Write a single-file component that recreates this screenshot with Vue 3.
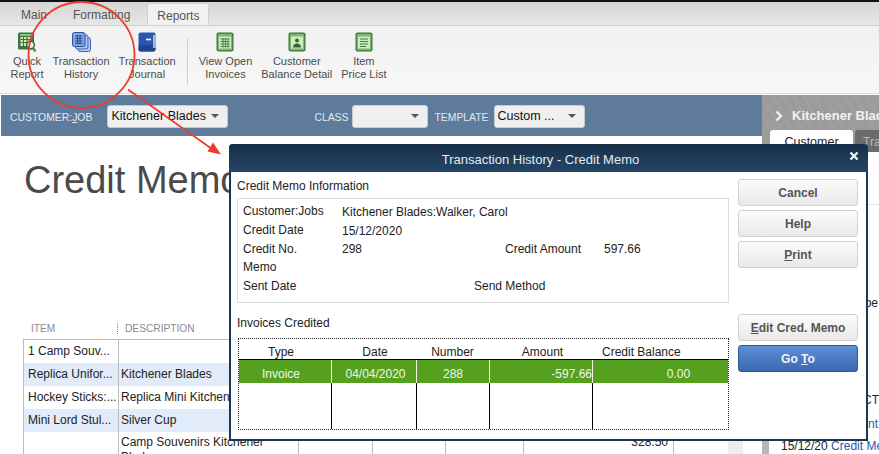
<script setup>
const leftTools = [
  { icon: 'quick', lines: ['Quick', 'Report'] },
  { icon: 'history', lines: ['Transaction', 'History'] },
  { icon: 'journal', lines: ['Transaction', 'Journal'] }
]
const rightTools = [
  { icon: 'grid', lines: ['View Open', 'Invoices'] },
  { icon: 'person', lines: ['Customer', 'Balance Detail'] },
  { icon: 'list', lines: ['Item', 'Price List'] }
]

const formRows = [
  { item: '1 Camp Souv...', desc: '', shade: false },
  { item: 'Replica Unifor...', desc: 'Kitchener Blades', shade: true },
  { item: 'Hockey Sticks:...', desc: 'Replica Mini Kitchener', shade: false },
  { item: 'Mini Lord Stul...', desc: 'Silver Cup', shade: true }
]
</script>

<template>
  <div class="screen">
    <div class="tabs">
      <span class="tab">Main</span>
      <span class="tab">Formatting</span>
      <span class="tab active">Reports</span>
    </div>

    <div class="toolbar">
      <div v-for="t in leftTools" :key="t.lines.join()" class="tool">
        <svg class="tool-icon" viewBox="0 0 20 20">
          <template v-if="t.icon === 'quick'">
            <rect x="1" y="0.5" width="16" height="17" rx="1.5" fill="#3c7540" />
            <rect x="3" y="2" width="12" height="2" fill="#8cc47c" />
            <rect x="3.500" y="5" width="10" height="9" fill="#c9e8b8" />
            <path d="M3.500 7.500h10M3.500 10.500h10M6.500 5v9M10 5v9" stroke="#3c7540" />
            <circle cx="13.500" cy="13" r="3.800" fill="#eef5ea" stroke="#2f6a36" stroke-width="1.500" />
            <path d="M16 16l2.500 3.500" stroke="#3f8a48" stroke-width="2.200" />
          </template>
          <template v-else-if="t.icon === 'history'">
            <rect x="7" y="5.500" width="12.500" height="14" rx="2" fill="#b4cef3" stroke="#3c64ac" />
            <rect x="4.500" y="3" width="12.500" height="14" rx="2" fill="#a9c6f0" stroke="#3c64ac" />
            <rect x="1.500" y="0.500" width="12.500" height="14" rx="2" fill="#7fa6e6" stroke="#2e539b" />
            <path d="M4 4h7.500M4 6.500h7.500M4 9h7.500M4 11.500h7.500M6.500 3.500v8.500M9 3.500v8.500" stroke="#27478c" stroke-width="0.900" />
          </template>
          <template v-else>
            <rect x="1.500" y="0.500" width="17" height="19" rx="2" fill="#2a56ac" />
            <rect x="1.500" y="13" width="17" height="6.500" rx="2" fill="#20448f" />
            <rect x="16" y="3" width="2.500" height="13" fill="#9dbcec" />
            <path d="M9 7.500h5" stroke="#fff" stroke-width="1.600" />
          </template>
        </svg>
        <span v-for="l in t.lines" :key="l">{{ l }}</span>
      </div>

      <div class="tool-sep"></div>

      <div v-for="t in rightTools" :key="t.lines.join()" class="tool">
        <svg class="tool-icon" viewBox="0 0 20 20">
          <rect x="1.500" y="0.500" width="17" height="19" rx="2" fill="#3c7540" />
          <rect x="2.800" y="1.800" width="14.400" height="16.400" rx="1" fill="#7cb96c" />
          <rect x="4" y="4.500" width="12" height="12" fill="#cdecbc" />
          <template v-if="t.icon === 'grid'">
            <path d="M5.500 7h9M5.500 9.500h9M5.500 12h9M5.500 14.500h9M8 6v9.500M10.500 6v9.500M13 6v9.500" stroke="#3f7d43" stroke-width="0.900" />
          </template>
          <template v-else-if="t.icon === 'person'">
            <circle cx="10" cy="8.500" r="2" fill="#2f6a36" />
            <path d="M6 15.500c0-3 2-4 4-4s4 1 4 4z" fill="#2f6a36" />
          </template>
          <template v-else>
            <path d="M6 7h8M6 9.500h8M6 12h8M6 14.500h6" stroke="#3f7d43" />
          </template>
        </svg>
        <span v-for="l in t.lines" :key="l">{{ l }}</span>
      </div>
    </div>

    <div class="workspace">
      <div class="form-pane">
        <div class="cust-bar">
          <span class="bar-label">CUSTOMER:<u>J</u>OB</span>
          <div class="combo combo-cust focused">Kitchener Blades<i class="caret"></i></div>
          <span class="bar-label label-class">CLASS</span>
          <div class="combo combo-class"><i class="caret"></i></div>
          <span class="bar-label label-template">TEMPLATE</span>
          <div class="combo combo-tpl">Custom ...<i class="caret"></i></div>
        </div>

        <h1 class="form-title">Credit Memo</h1>

        <div class="col-heads">
          <span class="head-item">ITEM</span>
          <span class="head-desc">DESCRIPTION</span>
        </div>

        <div class="table-wrap">
          <div class="lines">
            <div v-for="r in formRows" :key="r.item" class="line" :class="{ shade: r.shade }">
              <div class="cell">{{ r.item }}</div>
              <div class="cell desc">{{ r.desc }}</div>
              <div class="cell"></div>
              <div class="cell"></div>
              <div class="cell"></div>
              <div class="cell"></div>
              <div class="cell"></div>
            </div>
            <div class="line tall">
              <div class="cell"></div>
              <div class="cell desc wrap">Camp Souvenirs Kitchener Blades</div>
              <div class="cell"></div>
              <div class="cell"></div>
              <div class="cell"></div>
              <div class="cell num">328.50</div>
              <div class="cell"></div>
            </div>
          </div>
          <div class="table-scroll"></div>
        </div>
      </div>

      <div class="side">
        <div class="side-head">
          <div class="side-title">
            <svg class="chev" viewBox="0 0 8 12"><path d="M1.500 1.500L6 6l-4.500 4.500" fill="none" stroke="#f4f4f4" stroke-width="2.200" /></svg>
            <span>Kitchener Blades</span>
          </div>
          <div class="side-tabs">
            <span class="side-tab on">Customer</span>
            <span class="side-tab">Transaction</span>
          </div>
        </div>
        <div class="side-body">
          <div class="side-thumb"></div>
          <div class="side-text">
            <div class="side-rule"></div>
            <div class="side-end first">Customer Type</div>
            <div class="side-end second">CONTACT</div>
            <div class="side-end third">Payment</div>
            <div class="side-date">15/12/20 <span class="blue">Credit Memo</span></div>
          </div>
        </div>
      </div>
    </div>

    <div class="dialog">
      <div class="dlg-title">
        <span>Transaction History - Credit Memo</span>
        <svg class="dlg-close" viewBox="0 0 10 10"><path d="M1.500 1.500l7 7M8.500 1.500l-7 7" stroke="#eef2f6" stroke-width="2.400" /></svg>
      </div>
      <div class="dlg-body">
        <div class="dlg-main">
          <div class="group-label">Credit Memo Information</div>
          <div class="info">
            <div class="info-row">
              <span class="k">Customer:Jobs</span><span class="v low">Kitchener Blades:Walker, Carol</span>
            </div>
            <div class="info-row">
              <span class="k">Credit Date</span><span class="v low">15/12/2020</span>
            </div>
            <div class="info-row">
              <span class="k">Credit No.</span><span class="v mid">298</span>
              <span class="k">Credit Amount</span><span>597.66</span>
            </div>
            <div class="info-row"><span class="k">Memo</span></div>
            <div class="info-row">
              <span class="k">Sent Date</span><span class="send">Send Method</span>
            </div>
          </div>

          <div class="group-label credited">Invoices Credited</div>
          <div class="inv">
            <div class="inv-head">
              <span class="h1">Type</span>
              <span class="h2">Date</span>
              <span class="h3">Number</span>
              <span class="h4">Amount</span>
              <span class="h5">Credit Balance</span>
            </div>
            <div class="inv-row picked">
              <span class="h1">Invoice</span>
              <span class="h2">04/04/2020</span>
              <span class="h3">288</span>
              <span class="amt">-597.66</span>
              <span class="bal">0.00</span>
            </div>
            <div class="inv-row blank">
              <span></span><span></span><span></span><span></span><span></span>
            </div>
          </div>
        </div>

        <div class="dlg-actions">
          <button class="btn">Cancel</button>
          <button class="btn">Help</button>
          <button class="btn"><u>P</u>rint</button>
          <button class="btn push"><u>E</u>dit Cred. Memo</button>
          <button class="btn primary">Go <u>T</u>o</button>
        </div>
      </div>
    </div>

    <svg class="markup" viewBox="0 0 879 454">
      <ellipse cx="81.500" cy="55" rx="53" ry="53" fill="none" stroke="#ee3b2c" stroke-width="1.800" />
      <path d="M128 89.500L212 149" stroke="#ee3b2c" stroke-width="1.600" />
      <path d="M221 154.500l-13.500-3 5.500-9z" fill="#ee3b2c" />
    </svg>
  </div>
</template>

<style scoped>
.screen {
  position: relative;
  width: 879px;
  height: 454px;
  overflow: hidden;
  background: #fff;
  font-family: "Liberation Sans", Arial, sans-serif;
  font-size: 12px;
  color: #333;
  display: flex;
  flex-direction: column;
}

.tabs {
  height: 23px;
  margin-top: 2px;
  box-shadow: 0 -2px 0 #111;
  background: linear-gradient(#d6d6d6, #e6e6e6);
  display: flex;
  align-items: flex-end;
  padding-left: 11px;
  flex-shrink: 0;
}

.tab {
  padding: 0 10px;
  height: 22px;
  line-height: 25px;
  margin-right: 6px;
  color: #555;
}

.tab.active {
  margin-left: 1px;
  background: #f1f1f1;
  border: 1px solid #cfcfcf;
  border-bottom: 0;
  border-radius: 3px 3px 0 0;
  width: 62px;
  box-sizing: border-box;
  text-align: center;
  padding: 0;
}

.toolbar {
  height: 69px;
  flex-shrink: 0;
  border-top: 1px solid #d2d2d2;
  border-bottom: 1px solid #dcdcdc;
  box-sizing: border-box;
  background: linear-gradient(#f1f1f1, #f7f7f7);
  display: flex;
  align-items: flex-start;
  gap: 9px;
  padding: 6px 0 0 10.500px;
  font-size: 11px;
  color: #4c4c4c;
}

.tool {
  display: flex;
  flex-direction: column;
  align-items: center;
  line-height: 13px;
  white-space: nowrap;
}

.tool-icon {
  width: 20px;
  height: 20px;
  margin-bottom: 3px;
}

.tool-sep {
  width: 1px;
  height: 47px;
  margin: 6px 2px 0;
  background: #cfcfcf;
}

.workspace {
  flex: 1;
  min-height: 0;
  display: flex;
}

.form-pane {
  width: 761px;
  margin-left: 1px;
  flex-shrink: 0;
  margin-top: 1px;
}

.cust-bar {
  height: 41px;
  background: #5f7b9c;
  display: flex;
  align-items: center;
  padding-left: 9px;
  box-sizing: border-box;
}

.bar-label {
  font-size: 10.400px;
  color: #e2e8ef;
  margin-top: 4px;
}

.combo {
  position: relative;
  height: 23px;
  line-height: 20px;
  box-sizing: border-box;
  background: #efefef;
  border: 1px solid #c8ccd1;
  border-radius: 3px;
  padding-left: 3px;
  color: #111;
  margin-top: 2px;
  font-size: 12.500px;
}

.combo.focused {
  border-color: #b5cbe8;
}

.combo-cust {
  width: 121px;
  margin-left: 15px;
}

.combo-class {
  width: 76px;
  margin-left: 4px;
}

.combo-tpl {
  width: 91px;
  margin-left: 5px;
}

.label-class {
  margin-left: 86px;
}

.label-template {
  margin-left: 6px;
}

.caret {
  position: absolute;
  right: 8px;
  top: 8px;
  border: 4px solid transparent;
  border-top: 4px solid #555;
  border-bottom: 0;
}

.form-title {
  margin: 22px 0 0 23px;
  font-size: 38px;
  line-height: 44px;
  font-weight: 400;
  color: #4a4a4a;
}

.col-heads {
  margin: 0 0 0 30px;
  padding-top: 122px;
  height: 10px;
  font-size: 10.200px;
  line-height: 10px;
  color: #8b8b8b;
  display: flex;
}

.head-item {
  position: relative;
  width: 94px;
}

.head-item::after {
  content: "";
  position: absolute;
  left: 86px;
  top: -1px;
  height: 11px;
  border-left: 1px dotted #8b8b8b;
}

.table-wrap {
  display: flex;
  margin: 5px 0 0 22px;
}

.lines {
  width: 705px;
  flex-shrink: 0;
  border-top: 1px solid #bbb;
}

.table-scroll {
  width: 15px;
  background: #eeeeee;
}

.line {
  display: grid;
  grid-template-columns: 95px 180px 74px 73px 78px 150px 55px;
  height: 23px;
  line-height: 22px;
}

.line.shade {
  background: #e1ebfa;
}

.line.tall {
  height: 40px;
}

.cell {
  border-left: 1px solid #bbb;
  padding: 0 3px 0 4px;
  white-space: nowrap;
  overflow: hidden;
  color: #222;
}

.cell.desc {
  padding-left: 2px;
}

.cell.wrap {
  white-space: normal;
  line-height: 15px;
  padding-top: 3px;
}

.cell.num {
  text-align: right;
  padding-right: 5px;
  line-height: 21px;
}

.side {
  flex: 1;
  min-width: 0;
  display: flex;
  flex-direction: column;
  margin-top: 1px;
}

.side-head {
  height: 57px;
  flex-shrink: 0;
  background-color: #9c9b99;
  background-image: repeating-linear-gradient(60deg, rgba(255, 255, 255, 0.05) 0 2px, transparent 2px 9px);
  overflow: hidden;
}

.side-title {
  display: flex;
  align-items: center;
  margin: 14px 0 0 13px;
  font-size: 13px;
  font-weight: 700;
  color: #f2f2f2;
  white-space: nowrap;
  line-height: 14px;
}

.chev {
  width: 8px;
  height: 12px;
  margin-right: 9px;
  flex-shrink: 0;
}

.side-tabs {
  display: flex;
  gap: 2px;
  margin: 7px 0 0 8px;
  white-space: nowrap;
}

.side-tab {
  flex-shrink: 0;
  height: 30px;
  line-height: 24px;
  padding: 0 11px 0 8px;
  background: #6b6b6b;
  color: #bbb;
  border-radius: 3px 3px 0 0;
}

.side-tab.on {
  width: 83px;
  box-sizing: border-box;
  padding: 0;
  text-align: center;
  background: #fff;
  color: #222;
  font-size: 12.500px;
}

.side-body {
  flex: 1;
  min-height: 0;
  display: flex;
}

.side-thumb {
  width: 7px;
  margin-top: 288px;
  background: #b6b6b6;
  flex-shrink: 0;
}

.side-text {
  flex: 1;
  min-width: 0;
  overflow: hidden;
}

.side-rule {
  height: 1px;
  margin-top: 52px;
  background: #e2e2e2;
}

.side-end {
  white-space: nowrap;
  height: 14px;
  line-height: 14px;
  text-align: right;
  color: #222;
}

.side-end.first {
  margin: 91px 1px 0 0;
}

.side-end.second {
  margin-top: 83px;
}

.side-end.third {
  margin: 10px 1px 0 0;
  color: #2f56a8;
}

.side-date {
  margin: 8px 0 0 12px;
  white-space: nowrap;
  color: #222;
}

.blue {
  color: #2f56a8;
}

.dialog {
  position: absolute;
  left: 229px;
  top: 144px;
  width: 639px;
  height: 297px;
  box-sizing: border-box;
  border: 2px solid #1e3751;
  border-top: 0;
  border-radius: 4px 4px 0 0;
  background: #fff;
  display: flex;
  flex-direction: column;
}

.dlg-title {
  position: relative;
  height: 28px;
  margin: 0 -2px;
  padding-right: 16px;
  flex-shrink: 0;
  border-radius: 4px 4px 0 0;
  background: linear-gradient(#182f48, #244668);
  color: #e6ebf1;
  text-align: center;
  line-height: 31px;
  font-size: 13px;
}

.dlg-close {
  position: absolute;
  right: 9px;
  top: 7px;
  width: 10px;
  height: 10px;
}

.dlg-body {
  flex: 1;
  min-height: 0;
  display: flex;
  padding: 0 8px 0 6px;
}

.dlg-main {
  width: 492px;
  margin-right: 9px;
  flex-shrink: 0;
}

.group-label {
  height: 26px;
  line-height: 29px;
  color: #222;
}

.info {
  height: 105px;
  box-sizing: border-box;
  border: 1px solid #dedede;
  padding: 3px 0 0 5px;
}

.info-row {
  display: flex;
  height: 18.800px;
  line-height: 19px;
  color: #222;
  white-space: nowrap;
}

.k {
  width: 99px;
  flex-shrink: 0;
}

.v.low {
  line-height: 21px;
}

.v.mid {
  width: 163px;
}

.send {
  margin-left: 132px;
}

.group-label.credited {
  height: 35px;
  line-height: 40px;
}

.inv {
  margin-left: 1px;
  width: 491px;
  height: 92px;
  box-sizing: border-box;
  border: 1px dotted #222;
  display: flex;
  flex-direction: column;
}

.inv-head,
.inv-row {
  display: grid;
  grid-template-columns: 92px 85px 73px 103px 1fr;
  text-align: center;
}

.inv-head {
  height: 20px;
  line-height: 26px;
  border-bottom: 1px solid #000;
  color: #222;
  white-space: nowrap;
}

.h1 {
  padding-right: 8px;
}

.h2 {
  padding-left: 3px;
}

.h4 {
  padding-left: 4px;
}

.h5 {
  text-align: left;
  padding-left: 10px;
}

.inv-row {
  height: 23px;
  line-height: 29px;
}

.inv-row > span + span {
  border-left: 1px solid #000;
}

.picked {
  background: #56a01f;
  color: #f1f6ec;
}

.picked > span + span {
  border-left-color: #f1f6ec;
}

.amt {
  text-align: right;
}

.bal {
  padding-left: 36px;
}

.blank {
  flex: 1;
}

.dlg-actions {
  width: 120px;
  padding-top: 7px;
  display: flex;
  flex-direction: column;
  gap: 4px;
}

.btn {
  height: 27px;
  padding: 0;
  box-sizing: border-box;
  font: 700 12px "Liberation Sans", Arial, sans-serif;
  color: #555;
  border: 1px solid #d0d0d0;
  border-radius: 3px;
  background: linear-gradient(#fbfbfb, #e9e9e9);
}

.btn.push {
  margin-top: 42px;
}

.btn.primary {
  color: #f0f4fa;
  border-color: #2f5a96;
  background: linear-gradient(#5d8fd6, #3b68b2);
}

.markup {
  position: absolute;
  inset: 0;
  width: 879px;
  height: 454px;
  pointer-events: none;
}
</style>
